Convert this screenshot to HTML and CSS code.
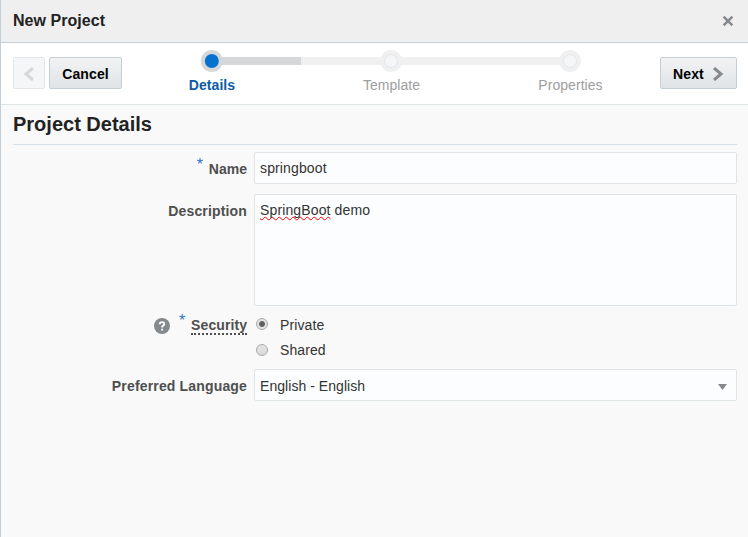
FILE: index.html
```html
<!DOCTYPE html>
<html lang="en">
<head>
<meta charset="utf-8">
<title>New Project</title>
<link rel="stylesheet" href="styles.css">
</head>
<body>
<div class="dialog">
  <header class="titlebar">
    <h1>New Project</h1>
    <svg class="close" width="12" height="12" viewBox="0 0 12 12"><path d="M1.6 1.6L10.4 10.4M10.4 1.6L1.6 10.4"/></svg>
  </header>
  <nav class="toolbar">
    <button class="btn back" disabled aria-label="Back"><svg width="12" height="14" viewBox="0 0 12 14"><path d="M10 1L3 7L10 13"/></svg></button>
    <button class="btn cancel">Cancel</button>
    <div class="train">
      <svg class="track" width="538" height="22" viewBox="0 0 538 22">
        <rect x="90" y="7" width="358" height="8" fill="#f0f0f0"/>
        <rect x="90" y="7" width="89" height="8" fill="#d6d7d8"/>
        <circle cx="89.8" cy="11" r="11" fill="#d6d7d8"/>
        <circle cx="89.8" cy="11" r="7" fill="#0572ce"/>
        <circle cx="269" cy="11" r="11" fill="#f0f0f0"/>
        <circle cx="269" cy="11" r="6.5" fill="#f5f6f8" stroke="#e2e7eb"/>
        <circle cx="448" cy="11" r="11" fill="#f0f0f0"/>
        <circle cx="448" cy="11" r="6.5" fill="#f5f6f8" stroke="#e2e7eb"/>
      </svg>
      <div class="steps"><span class="current">Details</span><span>Template</span><span>Properties</span></div>
    </div>
    <button class="btn next">Next<svg width="12" height="14" viewBox="0 0 12 14"><path d="M2 1L9 7L2 13"/></svg></button>
  </nav>
  <main>
    <h2>Project Details</h2>
    <div class="row name"><div class="label"><span class="star">*</span>Name</div><div class="field">springboot</div></div>
    <div class="row description"><div class="label"><span class="wide">Description</span></div><div class="field"><span class="typo">SpringBoot</span> demo</div></div>
    <div class="row security">
      <div class="label">
        <svg class="help" width="16" height="16" viewBox="0 0 16 16"><circle cx="8" cy="8" r="8"/><path d="M5.7 6.2C5.8 3.4 10.3 3.5 10.3 6C10.3 7.5 8.1 7.6 8.1 9.4M8.1 10.7V12.4"/></svg>
        <span class="star">*</span><span class="hint">Security</span>
      </div>
      <div class="options">
        <div class="option"><span class="radio checked"></span>Private</div>
        <div class="option"><span class="radio"></span>Shared</div>
      </div>
    </div>
    <div class="row language"><div class="label"><span class="wide">Preferred Language</span></div><div class="field">English - English<svg width="9" height="6" viewBox="0 0 9 6"><path d="M0 0H9L4.5 6Z"/></svg></div></div>
  </main>
</div>
</body>
</html>
```
FILE: styles.css
```css
* { box-sizing: border-box; }
body {
  margin: 0;
  font: 14px/16px "Liberation Sans", Arial, sans-serif;
  color: #333;
  background: #f9f9f9;
}
svg { display: block; flex: none; }
h1, h2 { margin: 0; color: #222; }
.dialog { height: 537px; border-left: 1px solid #c4ced7; overflow: hidden; }
.titlebar {
  height: 43px;
  display: flex;
  align-items: center;
  justify-content: space-between;
  padding: 0 14px 0 12px;
  background: #efefef;
  border-bottom: 1px solid #c4ced7;
}
h1 { margin-top: -1px; font-size: 16px; line-height: 18px; letter-spacing: 0.05px; }
.close { fill: none; stroke: #848a90; stroke-width: 2.5; }
.toolbar {
  height: 62px;
  display: flex;
  align-items: flex-start;
  padding: 14px 11px 0 12px;
  background: #fff;
  border-bottom: 1px solid #dfe4e7;
}
.btn {
  height: 32px;
  display: flex;
  align-items: center;
  justify-content: center;
  padding: 2px 0 0;
  border: 1px solid #c4ced7;
  border-radius: 2px;
  background: linear-gradient(#f1f3f3, #e0e4e7);
  font: bold 14px/16px "Liberation Sans", Arial, sans-serif;
  letter-spacing: 0.12px;
  color: #000;
}
.btn svg { fill: none; stroke: #84898e; stroke-width: 3; }
.back { width: 32px; background: #f5f6f7; border-color: #e2e6ea; }
.back svg { stroke: #d6d7d8; }
.cancel { width: 73px; margin-left: 4px; }
.next { width: 77px; gap: 8px; }
.train { flex: 1; margin-top: -7px; }
.steps { display: grid; grid-template-columns: repeat(3, 179px); margin: 5px 0 0 1px; text-align: center; letter-spacing: 0.05px; color: #9e9e9e; }
.current { margin-left: -1px; font-weight: bold; color: #0b5ba5; }
main { padding: 0 11px 0 12px; }
h2 { height: 40px; padding-top: 8px; font-size: 20px; line-height: 23px; border-bottom: 1px solid #d6dfe6; }
.row { display: grid; grid-template-columns: 234px 1fr; column-gap: 7px; }
.label { display: flex; justify-content: flex-end; font-weight: bold; color: #4f4f4f; }
.wide { letter-spacing: 0.16px; }
.field {
  height: 32px;
  padding: 7px 5px;
  border: 1px solid #dfe4e7;
  border-radius: 2px;
  background: #fcfdfe;
  letter-spacing: 0.13px;
}
.name { margin-top: 7px; }
.name .label { padding-top: 9px; }
.star { margin: -4px 6px 0 0; font-size: 16px; font-weight: normal; color: #2f73cc; }
.description { margin-top: 10px; }
.description .label { padding-top: 9px; }
.description .field { height: 112px; }
.typo { text-decoration: underline wavy #f00 1px; text-decoration-skip-ink: none; text-underline-offset: 1px; }
.security { margin-top: 11px; }
.security .label { align-items: flex-start; }
.help { margin: 1px 9px 0 0; fill: #84898e; }
.help path { fill: none; stroke: #fff; stroke-width: 1.9; }
.hint { height: 18px; border-bottom: 2px dotted #4f4f4f; letter-spacing: 0.08px; }
.options { display: grid; gap: 9px; }
.option { display: flex; align-items: center; gap: 12px; height: 16px; padding-left: 2px; letter-spacing: 0.1px; }
.radio { width: 12px; height: 12px; margin-top: -2px; border: 1px solid #aaa; border-radius: 50%; background: linear-gradient(#e4e4e4, #dadada); }
.option:last-child .radio { margin-top: 0; }
.checked { background: radial-gradient(circle, #606060 0 2.5px, #e2e2e2 3.3px); }
.language { margin-top: 11px; }
.language .label { padding-top: 9px; }
.language .field { display: flex; justify-content: space-between; padding: 8px 9px 6px 5px; letter-spacing: 0.05px; }
.language svg { margin-top: 6px; fill: #84898e; }
```
